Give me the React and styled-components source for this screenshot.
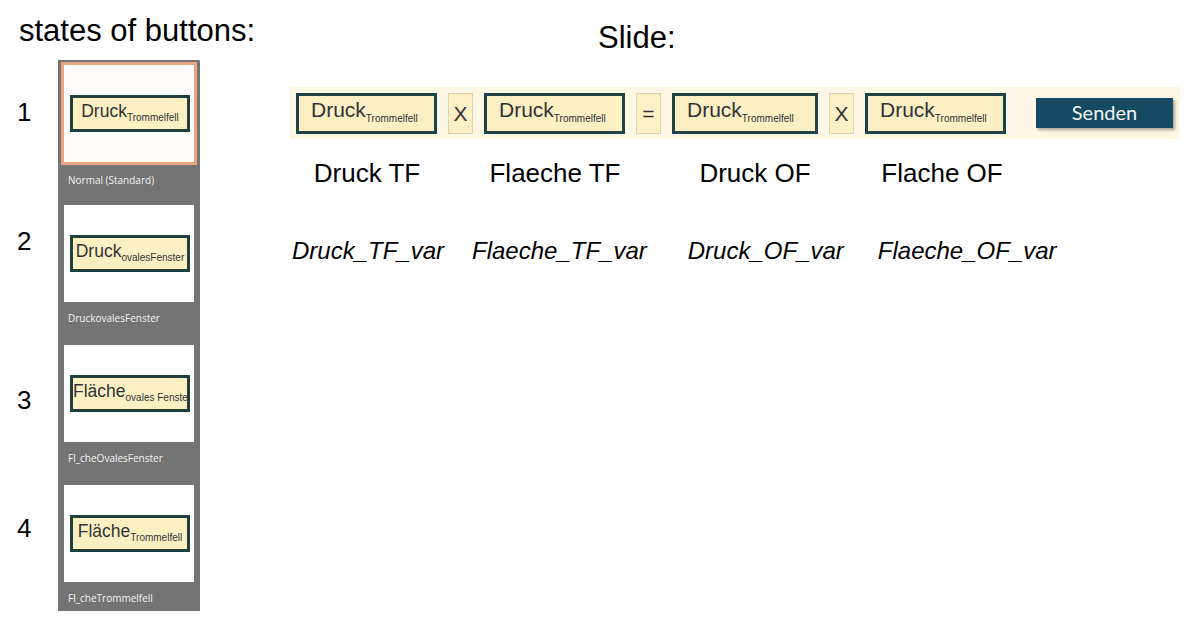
import React from 'react';
import styled, { createGlobalStyle } from 'styled-components';

const GlobalStyle = createGlobalStyle`
  html, body {
    margin: 0;
    padding: 0;
    background: #ffffff;
    font-family: "Liberation Sans", Arial, sans-serif;
    color: #000;
  }
`;

const states = [
  { main: 'Druck', sub: 'Trommelfell', caption: 'Normal (Standard)', selected: true, numTop: 37 },
  { main: 'Druck', sub: 'ovalesFenster', caption: 'DruckovalesFenster', numTop: 26 },
  { main: 'Fläche', sub: 'ovales Fenster', caption: 'Fl_cheOvalesFenster', numTop: 45 },
  { main: 'Fläche', sub: 'Trommelfell', caption: 'Fl_cheTrommelfell', numTop: 33 },
];

const labels = [
  { text: 'Druck TF', w: 154 },
  { text: 'Flaeche TF', w: 222 },
  { text: 'Druck OF', w: 178 },
  { text: 'Flache OF', w: 196 },
];

const vars = [
  { text: 'Druck_TF_var', ml: 2 },
  { text: 'Flaeche_TF_var', ml: 28 },
  { text: 'Druck_OF_var', ml: 41 },
  { text: 'Flaeche_OF_var', ml: 34 },
];

const App = () => {
  return (
    <>
      <GlobalStyle />
      <S_Page>
        <S_Left>
          <S_Heading>states of buttons:</S_Heading>
          <S_StatesBody>
            <S_Numbers>
              {states.map((s, i) => (
                <S_NumberSlot key={i} $pt={s.numTop}>{i + 1}</S_NumberSlot>
              ))}
            </S_Numbers>
            <S_Panel>
              {states.map((s, i) => (
                <S_Item key={i}>
                  <S_Thumb $selected={s.selected}>
                    <S_MiniButton>
                      {s.main}<sub>{s.sub}</sub>
                    </S_MiniButton>
                  </S_Thumb>
                  <S_Caption $selected={s.selected}>{s.caption}</S_Caption>
                </S_Item>
              ))}
            </S_Panel>
          </S_StatesBody>
        </S_Left>

        <S_Right>
          <S_SlideTitle>Slide:</S_SlideTitle>
          <S_Bar>
            <S_VarButton>Druck<sub>Trommelfell</sub></S_VarButton>
            <S_Op>X</S_Op>
            <S_VarButton>Druck<sub>Trommelfell</sub></S_VarButton>
            <S_Op>=</S_Op>
            <S_VarButton $w={146}>Druck<sub>Trommelfell</sub></S_VarButton>
            <S_Op>X</S_Op>
            <S_VarButton>Druck<sub>Trommelfell</sub></S_VarButton>
            <S_Send>Senden</S_Send>
          </S_Bar>
          <S_LabelRow>
            {labels.map((l) => (
              <S_Label key={l.text} $w={l.w}>{l.text}</S_Label>
            ))}
          </S_LabelRow>
          <S_VarRow>
            {vars.map((v) => (
              <S_VarName key={v.text} $ml={v.ml}>{v.text}</S_VarName>
            ))}
          </S_VarRow>
        </S_Right>
      </S_Page>
    </>
  );
};

const S_Page = styled.div`
  display: flex;
  width: 1188px;
  height: 620px;
  overflow: hidden;
`;

const S_Left = styled.div`
  width: 290px;
  flex-shrink: 0;
`;

const S_Heading = styled.h1`
  margin: 0;
  padding: 13px 0 0 19px;
  height: 60px;
  box-sizing: border-box;
  font-size: 31px;
  line-height: 36px;
  font-weight: normal;
  white-space: nowrap;
`;

const S_StatesBody = styled.div`
  display: flex;
`;

const S_Numbers = styled.div`
  width: 58px;
  display: flex;
  flex-direction: column;
`;

const S_NumberSlot = styled.div`
  height: 140px;
  box-sizing: border-box;
  padding: ${(p) => p.$pt}px 0 0 17px;
  font-size: 26px;
  line-height: 30px;
`;

const S_Panel = styled.div`
  width: 142px;
  height: 551px;
  background: #747474;
  padding: 5px 0 0 6px;
  box-sizing: border-box;
  overflow: hidden;
  display: flex;
  flex-direction: column;
`;

const S_Item = styled.div`
  height: 140px;
  flex-shrink: 0;
`;

const S_Thumb = styled.div`
  width: 130px;
  height: 97px;
  background: #ffffff;
  box-sizing: border-box;
  padding: 30px 0 0 6px;
  ${(p) => p.$selected && `
    box-shadow: 0 0 0 3px #e9a481;
    background: #fffdfb;
  `}
`;

const S_MiniButton = styled.div`
  width: 120px;
  height: 37px;
  box-sizing: border-box;
  border: 3px solid #20403f;
  background: #fcf0c3;
  color: #333;
  font-size: 17.5px;
  line-height: 26px;
  text-align: center;
  white-space: nowrap;
  overflow: hidden;
  sub {
    font-size: 10px;
    vertical-align: -4px;
    line-height: 0;
  }
`;

const S_Caption = styled.div`
  padding: ${(p) => (p.$selected ? '11px' : '9px')} 0 0 4px;
  font-family: "Open Sans", sans-serif;
  font-size: 10px;
  color: #f2f2f2;
  line-height: 14px;
  white-space: nowrap;
`;

const S_Right = styled.div`
  flex: 1;
`;

const S_SlideTitle = styled.h1`
  margin: 0 0 31px 0;
  padding: 20px 0 0 308px;
  font-size: 31px;
  line-height: 36px;
  font-weight: normal;
`;

const S_Bar = styled.div`
  width: 890px;
  height: 52px;
  box-sizing: border-box;
  background: #fdf8e6;
  padding: 6px 0 0 6px;
  display: flex;
  align-items: flex-start;
  gap: 11px;
`;

const S_VarButton = styled.div`
  width: ${(p) => p.$w || 141}px;
  height: 41px;
  box-sizing: border-box;
  border: 3px solid #1f4448;
  background: #fcefc3;
  color: #333;
  font-size: 21px;
  line-height: 28px;
  padding-left: 12px;
  white-space: nowrap;
  sub {
    font-size: 10px;
    vertical-align: -5px;
    line-height: 0;
  }
`;

const S_Op = styled.div`
  width: 25px;
  height: 41px;
  box-sizing: border-box;
  border: 1px solid #e2d3a8;
  background: #fdf0c6;
  color: #333;
  font-size: 21px;
  line-height: 39px;
  text-align: center;
`;

const S_Send = styled.div`
  margin: 5px 0 0 19px;
  width: 137px;
  height: 30px;
  background: #154a62;
  box-shadow: 2px 2px 3px rgba(0, 0, 0, 0.35);
  color: #eef4f6;
  font-family: Lato, "Open Sans", sans-serif;
  font-size: 20px;
  line-height: 28px;
  text-align: center;
`;

const S_LabelRow = styled.div`
  display: flex;
  margin-top: 18px;
`;

const S_Label = styled.div`
  width: ${(p) => p.$w}px;
  text-align: center;
  font-size: 26px;
  line-height: 32px;
  white-space: nowrap;
`;

const S_VarRow = styled.div`
  display: flex;
  margin-top: 47px;
`;

const S_VarName = styled.div`
  margin-left: ${(p) => p.$ml}px;
  font-size: 24px;
  font-style: italic;
  line-height: 30px;
  white-space: nowrap;
`;

export default App;
